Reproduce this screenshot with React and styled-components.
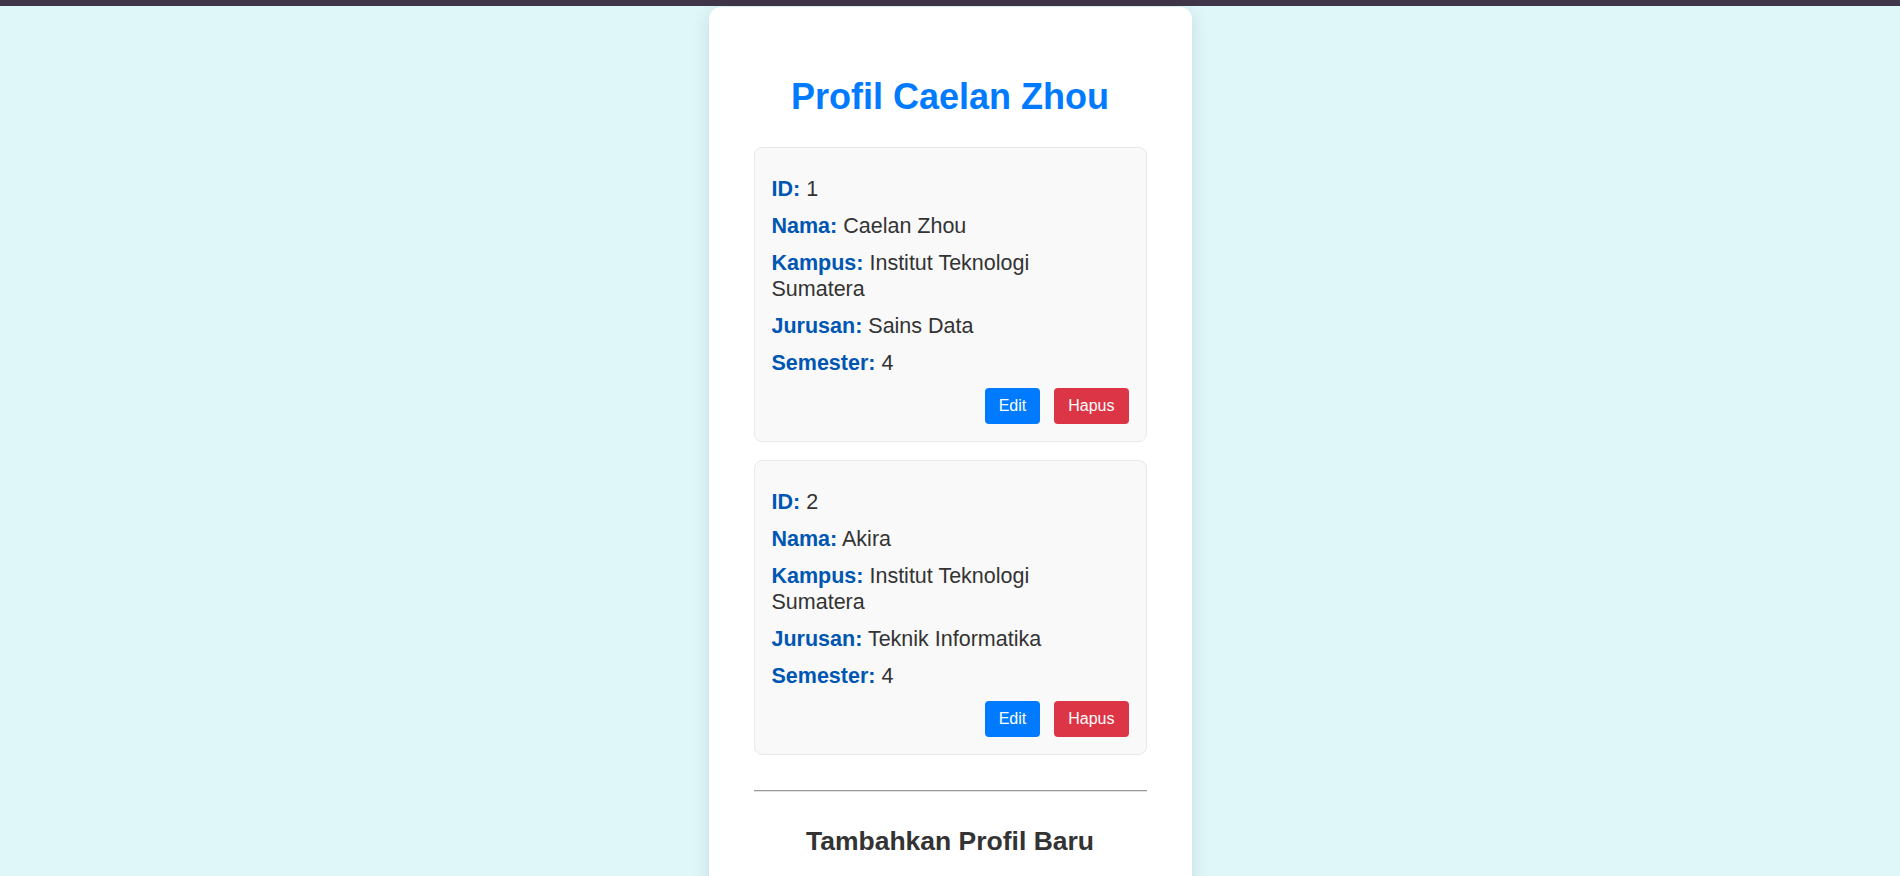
import React from "react";
import styled, { createGlobalStyle } from "styled-components";

const GlobalStyle = createGlobalStyle`
  * { box-sizing: border-box; }
  html, body { margin: 0; padding: 0; }
  body {
    background: #e0f7fa;
    font-family: "Liberation Sans", Arial, Helvetica, sans-serif;
    color: #333;
  }
`;

const TopBar = styled.div`
  height: 6px;
  background: #3f3649;
`;

const Page = styled.main`
  display: flex;
  justify-content: center;
  padding-top: 1px;
`;

const Container = styled.div`
  width: 483px;
  background: #ffffff;
  border-radius: 12px;
  padding: 45px;
  box-shadow: 0 4px 18px rgba(0, 0, 0, 0.12);
`;

const Title = styled.h1`
  margin: 24px 0 29px;
  text-align: center;
  color: #007bff;
  font-size: 36px;
  font-weight: 700;
  line-height: normal;
`;

const List = styled.div`
  display: flex;
  flex-direction: column;
  gap: 18px;
`;

const ProfileCard = styled.div`
  background: #f9f9f9;
  border: 1px solid #e9e9e9;
  border-radius: 8px;
  padding: 17px;
`;

const Field = styled.p`
  margin: 11px 0;
  max-width: 320px;
  font-size: 21.5px;
  line-height: 26px;
  color: #333;
`;

const Label = styled.strong`
  color: #0056b3;
  font-weight: 700;
`;

const Actions = styled.div`
  display: flex;
  justify-content: flex-end;
  gap: 14px;
  margin-top: 12px;
`;

const Button = styled.button`
  font-family: "Liberation Sans", Arial, sans-serif;
  font-size: 16px;
  line-height: 18px;
  padding: 9px 14px;
  border: none;
  border-radius: 4px;
  color: #fff;
  cursor: pointer;
  background: ${(p) => (p.$variant === "danger" ? "#dc3545" : "#007bff")};
`;

const Divider = styled.hr`
  margin: 35px 0 0;
  border: none;
  border-top: 1px solid #9a9a9a;
  border-bottom: 1px solid #e3e3e3;
  height: 0;
`;

const SubTitle = styled.h2`
  margin: 34px 0 20px;
  text-align: center;
  font-size: 26.5px;
  font-weight: 700;
  color: #333;
  line-height: normal;
`;

const Form = styled.form`
  display: flex;
  flex-direction: column;
  gap: 12px;
`;

const Input = styled.input`
  font-family: "Liberation Sans", Arial, sans-serif;
  font-size: 16px;
  padding: 10px 12px;
  border: 1px solid #ccc;
  border-radius: 4px;
`;

const profiles = [
  {
    id: 1,
    nama: "Caelan Zhou",
    kampus: "Institut Teknologi Sumatera",
    jurusan: "Sains Data",
    semester: 4,
  },
  {
    id: 2,
    nama: "Akira",
    kampus: "Institut Teknologi Sumatera",
    jurusan: "Teknik Informatika",
    semester: 4,
  },
];

export default function App() {
  return (
    <>
      <GlobalStyle />
      <TopBar />
      <Page>
        <Container>
          <Title>Profil Caelan Zhou</Title>
          <List>
            {profiles.map((p) => (
              <ProfileCard key={p.id}>
                <Field>
                  <Label>ID:</Label> {p.id}
                </Field>
                <Field>
                  <Label>Nama:</Label> {p.nama}
                </Field>
                <Field>
                  <Label>Kampus:</Label> {p.kampus}
                </Field>
                <Field>
                  <Label>Jurusan:</Label> {p.jurusan}
                </Field>
                <Field>
                  <Label>Semester:</Label> {p.semester}
                </Field>
                <Actions>
                  <Button type="button">Edit</Button>
                  <Button type="button" $variant="danger">
                    Hapus
                  </Button>
                </Actions>
              </ProfileCard>
            ))}
          </List>
          <Divider />
          <SubTitle>Tambahkan Profil Baru</SubTitle>
          <Form onSubmit={(e) => e.preventDefault()}>
            <Input placeholder="Nama" />
            <Input placeholder="Kampus" />
            <Input placeholder="Jurusan" />
            <Input placeholder="Semester" type="number" />
            <Button type="submit">Tambah Profil</Button>
          </Form>
        </Container>
      </Page>
    </>
  );
}
